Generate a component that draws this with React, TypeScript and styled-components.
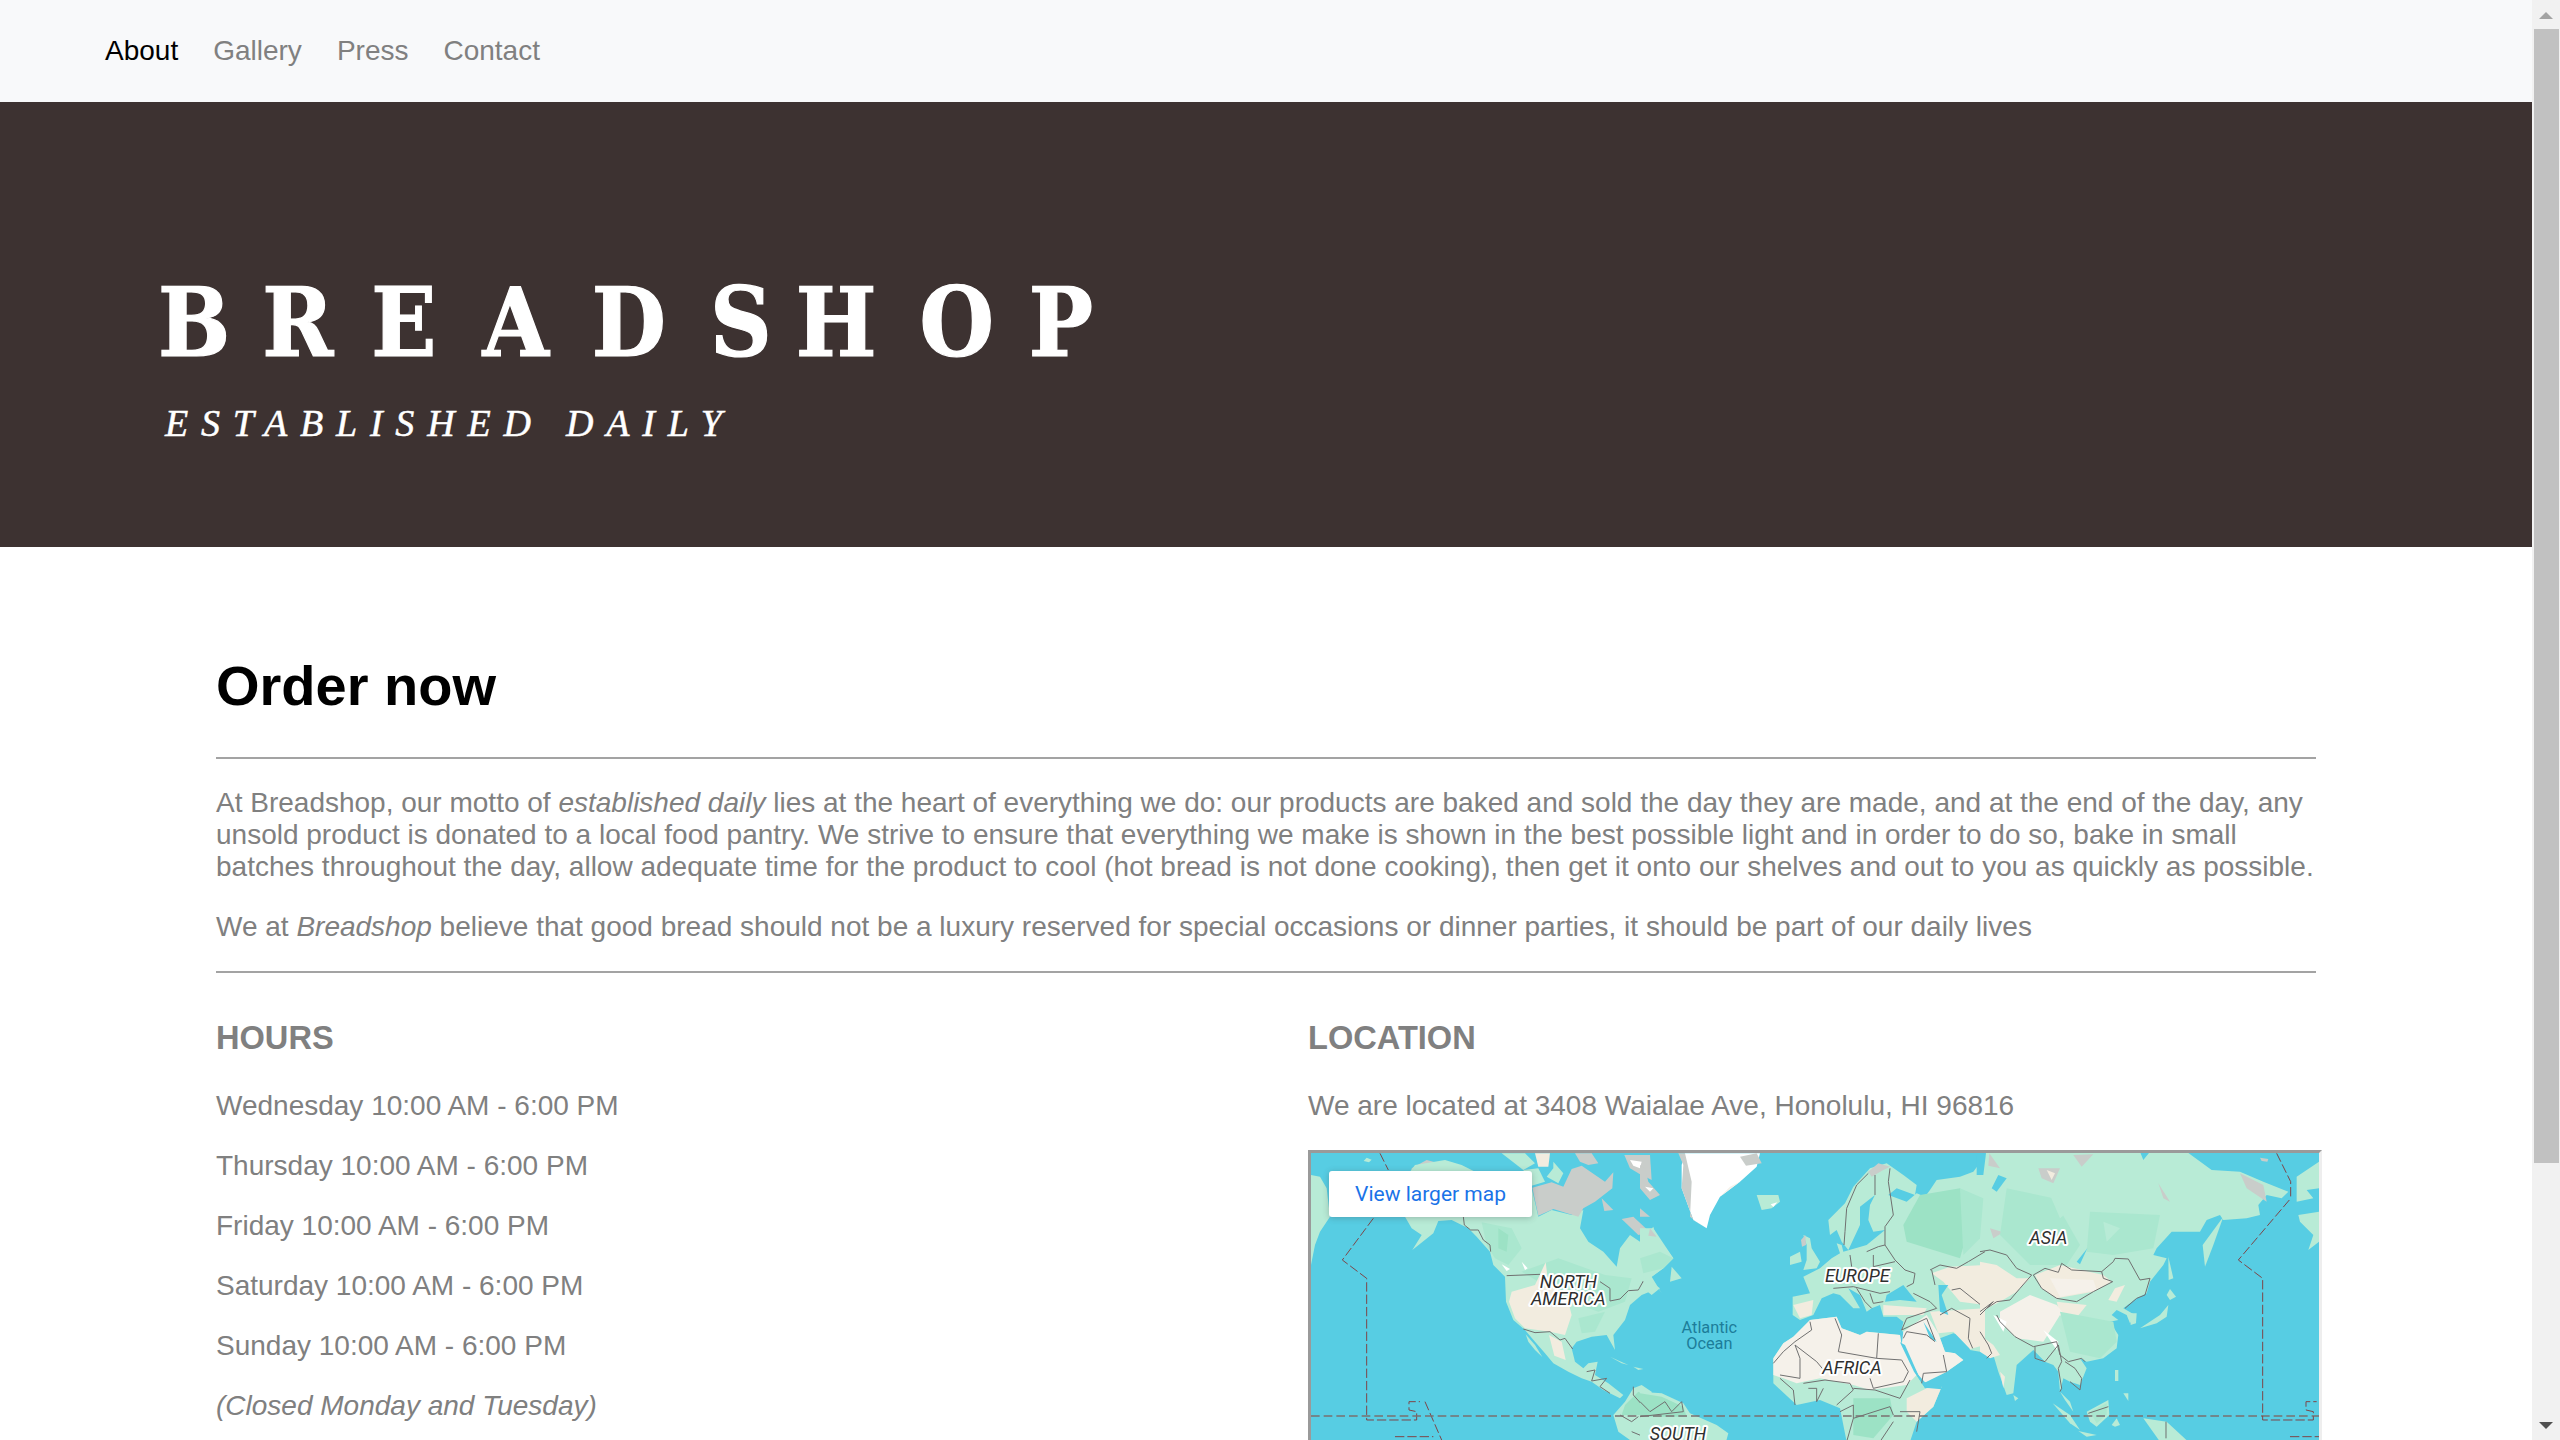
import React from "react";
import styled, { createGlobalStyle } from "styled-components";

const Global = createGlobalStyle`
  html { background: #fff; }
  body { margin: 0; font-family: "Liberation Sans", Arial, sans-serif; color: #808080; }
`;

const Page = styled.div`
  width: 2532px;
`;
const ScrollRail = styled.aside`
  position: fixed;
  top: 0;
  right: 0;
  width: 28px;
  height: 100vh;
  background: #f1f1f1;
  display: flex;
  flex-direction: column;
  justify-content: space-between;
`;
const ScrollThumb = styled.div`
  height: 1134px;
  margin: 29px 1px 0 2px;
  background: #c1c1c1;
`;
const ScrollArrow = styled.div<{ $down?: boolean }>`
  position: absolute;
  left: 7px;
  width: 0;
  height: 0;
  border-left: 7px solid transparent;
  border-right: 7px solid transparent;
  ${(p) =>
    p.$down
      ? "bottom: 11px; border-top: 7px solid #505050;"
      : "top: 12px; border-bottom: 7px solid #a3a3a3;"}
`;

const NavBar = styled.nav`
  height: 102px;
  box-sizing: border-box;
  background: #f8f9fa;
  display: flex;
  align-items: center;
  gap: 35px;
  padding-left: 105px;
`;
const NavLink = styled.a<{ $active?: boolean }>`
  font-size: 28px;
  line-height: 32px;
  color: ${(p) => (p.$active ? "#000" : "#808080")};
`;
const Hero = styled.header`
  height: 445px;
  box-sizing: border-box;
  background: #3d3231;
  padding: 169px 0 0 158px;
  color: #fff;
  overflow: hidden;
`;
const Wordmark = styled.div`
  font-family: "DejaVu Serif", serif;
  font-stretch: condensed;
  font-weight: 700;
  font-size: 95px;
  line-height: 104px;
  white-space: nowrap;
  -webkit-text-stroke: 1.2px #fff;
`;
const Glyph = styled.span<{ $gap: number }>`
  letter-spacing: ${(p) => p.$gap}px;
`;
const Tagline = styled.div`
  font-family: "Liberation Serif", serif;
  font-style: italic;
  font-size: 38px;
  line-height: 44px;
  letter-spacing: 12.8px;
  margin: 26px 0 0 7px;
  white-space: nowrap;
  -webkit-text-stroke: 0.5px #fff;
`;
const Main = styled.main`
  width: 2100px;
  padding: 107px 0 95px 216px;
`;
const Title = styled.h1`
  margin: 0 0 39px;
  font-size: 56px;
  line-height: 64px;
  font-weight: 700;
  color: #000;
`;
const Rule = styled.hr`
  margin: 0;
  border: 0;
  height: 2px;
  background: #a3a3a3;
`;
const Prose = styled.p`
  margin: 28px 0 28px;
  font-size: 28px;
  line-height: 32px;
  & + & {
    margin: 0 0 28px;
  }
`;
const Columns = styled.div`
  display: grid;
  grid-template-columns: 1092px 1014px;
  margin-top: 46px;
`;
const Heading = styled.h2`
  margin: 0 0 34px;
  font-size: 32.6px;
  line-height: 37px;
  font-weight: 700;
`;
const Line = styled.p`
  margin: 0 0 28px;
  font-size: 28px;
  line-height: 32px;
`;
const MapFrame = styled.div`
  position: relative;
  box-sizing: border-box;
  width: 1014px;
  height: 480px;
  margin-top: 28px;
  border: 3px solid #eeeeee;
  border-top-color: #9a9a9a;
  border-left-color: #9a9a9a;
  background: #57cde3;
  overflow: hidden;
`;
const MapArt = styled.svg`
  display: block;
  width: 1008px;
  height: 474px;
`;
const SoftLayer = styled.g`
  filter: blur(0.45px);
`;
const MapLink = styled.a`
  position: absolute;
  left: 18px;
  top: 18px;
  width: 203px;
  height: 46px;
  border-radius: 3px;
  background: #fff;
  box-shadow: 0 1px 6px rgba(60, 64, 67, 0.3);
  font-family: Roboto, sans-serif;
  font-size: 21px;
  line-height: 46px;
  text-align: center;
  color: #1a73e8;
`;
const Continent = styled.text`
  font-family: Roboto, sans-serif;
  font-style: italic;
  font-weight: 400;
  font-size: 54px;
  fill: #2f2f2f;
  stroke: #ffffff;
  stroke-width: 12px;
  stroke-linejoin: round;
  paint-order: stroke;
  text-anchor: middle;
`;
const OceanName = styled.text`
  font-family: Roboto, sans-serif;
  font-size: 49px;
  fill: #1d7d9a;
  text-anchor: middle;
`;

const L = "#b8ebd6", G = "#aae7cf", D = "#9ce2c5", T = "#f2ecdf", W = "#f5f1ea", S = "#c9cdca", O = "#57cde3", I = "#ffffff";
type Shape = [string, string];

const westLand: Shape[] = [
  [L, "18,90 45,95 65,130 75,215 45,260 30,300 18,360"],
  [L, "185,38 200,44 192,52 176,48"],
  [S, "320,70 365,45 430,62 440,80 320,80"],
  [L, "300,215 320,250 350,270 322,315 385,265 400,228 440,225 490,250 515,275 555,320 565,360 600,395 603,470 625,525 660,555 690,590 720,625 745,655 790,680 830,700 860,710 895,735 945,760 955,750 910,715 870,690 878,650 850,655 835,670 810,650 800,610 815,590 860,575 905,570 930,615 925,570 960,525 975,480 1010,450 1060,430 1070,445 1040,395 1075,370 1105,340 1050,265 1045,245 1005,290 975,270 945,310 935,365 895,320 850,290 825,250 835,195 800,210 740,195 700,215 680,130 600,120 540,95 470,60 420,45 330,60 300,100"],
  [S, "682,128 740,112 775,125 800,72 830,62 900,110 925,82 922,130 870,170 835,190 820,215 745,192 700,212"],
  [L, "745,50 775,85 760,115 725,95 745,70"],
  [L, "590,25 660,25 690,55 655,75"],
  [T, "690,25 735,25 730,65 700,65"],
  [L, "655,75 700,70 720,110 680,122"],
  [S, "810,25 860,25 880,55 850,60 825,50"],
  [S, "958,30 1035,30 1040,105 1000,85 975,70"],
  [I, "975,45 1010,50 1005,70 985,62"],
  [S, "890,160 925,195 898,198"],
  [S, "950,222 985,215 1035,262 1000,270"],
  [G, "530,232 620,250 650,310 610,360 570,340 545,300"],
  [D, "580,250 610,270 605,320 580,310"],
  [G, "650,380 760,340 900,390 980,400 960,470 880,500 800,470"],
  [I, "590,358 615,372 605,378"],
  [I, "650,350 668,370 660,375"],
  [T, "620,440 690,420 722,352 728,400 790,472 800,510 780,570 735,560 660,550 630,520 612,470"],
  [T, "732,570 770,590 782,645 748,632"],
  [G, "820,520 900,500 870,560 830,565"],
  [L, "662,568 690,600 712,636 690,615 670,590"],
  [L, "915,635 970,660 950,655"],
  [L, "985,665 1015,672 1000,675"],
  [L, "925,810 960,770 985,730 1010,720 1040,740 1040,885 975,885 940,860"],
  [D, "960,780 1000,740 1040,760 1040,810 950,810"],
];
const westBorders = [
  "605,392 705,388",
  "885,410 915,430 915,468 945,462 970,437 1000,435 1015,408 1030,435",
  "475,215 478,240 497,255 520,255 535,285 555,300 557,320",
  "655,552 690,563 735,560 765,585 780,580 803,612",
  "845,680 870,675 860,708 905,700 885,725 915,745",
  "985,725 985,750 1025,795 1040,795",
  "945,810 980,830 1000,815",
  "980,860 1040,885",
];

const middleLand: Shape[] = [
  [I, "135,25 360,25 350,65 300,110 240,155 210,210 200,250 160,225 125,130 125,60"],
  [S, "115,25 135,25 155,110 150,215 170,232 200,250 160,225 125,130 130,60"],
  [S, "300,35 350,25 365,55 318,62"],
  [W, "240,155 300,110 270,125"],
  [L, "350,150 415,150 420,170 395,190 365,195"],
  [I, "392,178 412,172 400,186"],
  [L, "0,250 40,250 100,340 70,370 35,395 0,405"],
  [G, "0,340 60,320 100,340 70,370 10,385"],
  [L, "95,365 125,400 90,410"],
  [L, "10,395 60,430 35,450 10,430"],
  [S, "0,60 15,70 25,110 60,150 30,165 0,130"],
  [I, "15,125 40,130 30,140"],
  [S, "0,190 30,215 0,215"],
  [S, "30,250 50,275 25,272"],
  [L, "0,740 65,745 130,775 150,805 230,840 265,865 258,890 0,890"],
  [D, "0,745 65,755 130,785 140,815 0,815"],
  [L, "500,300 490,270 510,280 515,310 540,350 530,370 490,375 500,345"],
  [S, "483,285 496,270 498,300 486,305"],
  [L, "450,335 480,320 485,350 450,360"],
  [L, "690,70 740,55 790,90 830,120 825,150 770,130 745,150 800,170 830,145 855,155 870,135 890,105 960,95 1000,80 1030,40 1040,20 1500,20 1510,45 1530,20 1640,20 1715,75 1800,80 1870,110 1945,140 1925,160 1880,150 1855,180 1860,210 1820,220 1750,225 1740,210 1700,225 1680,260 1595,260 1550,310 1540,330 1580,340 1570,360 1530,410 1520,445 1490,460 1450,490 1485,510 1470,535 1460,510 1430,495 1415,510 1435,525 1410,530 1435,570 1430,610 1390,640 1340,650 1320,640 1340,670 1320,720 1290,710 1270,700 1260,740 1290,770 1300,800 1275,765 1260,740 1255,680 1240,660 1215,650 1180,615 1130,660 1120,745 1100,750 1075,680 1060,630 1020,620 990,615 985,580 940,565 900,580 915,620 945,625 970,645 920,680 850,715 830,680 785,600 795,570 785,555 790,530 770,515 730,515 720,480 695,490 680,500 660,450 625,430 660,490 640,490 600,450 580,445 545,460 520,510 480,525 458,510 458,455 510,445 490,395 540,370 575,340 600,325 590,295 605,300 610,320 680,300 735,255 700,260 685,225 690,180 705,150 660,185 660,240 625,315 605,290 590,255 570,270 565,225 615,175 640,125"],
  [S, "685,80 715,55 750,65 730,75 695,95"],
  [D, "790,240 840,150 960,130 1000,200 960,340 800,290"],
  [G, "960,130 1030,160 1020,280 970,330"],
  [T, "875,385 930,365 1035,360 1035,480 960,470 910,410"],
  [T, "870,500 1035,490 1035,600 990,612 940,560 895,565"],
  [W, "790,560 860,510 895,565 915,620 945,625 970,645 920,680 850,715 830,680 785,600"],
  [T, "730,480 860,490 850,510 730,510"],
  [T, "460,480 520,465 515,510 480,520"],
  [O, "740,450 790,420 830,470 780,465 735,470"],
  [O, "895,420 925,420 905,450 925,510 900,500"],
  [O, "850,530 870,560 890,590 870,580"],
  [L, "510,525 590,515 605,550 660,570 680,560 780,570 785,600 830,690 855,730 905,725 880,785 830,830 810,890 620,890 600,790 540,765 470,780 400,715 400,640 430,595 460,575"],
  [W, "510,525 590,515 605,550 660,570 680,560 780,570 785,600 830,690 800,720 690,735 640,720 540,700 470,715 430,700 400,690 400,640 430,595 460,575"],
  [T, "800,760 860,730 905,725 880,785 830,830 800,800"],
  [D, "640,760 750,760 760,810 700,880 640,870"],
  [O, "780,592 795,600 835,690 855,712 905,722 905,733 855,728 822,680"],
];
const middleBorders = [
  "685,85 650,120 620,190 615,260 612,300",
  "705,90 705,150",
  "750,70 745,110 760,210 735,245 735,300",
  "630,330 635,365",
  "680,320 715,305 735,300 765,345 795,375 825,385 820,415 800,425",
  "700,330 700,365 765,350",
  "580,430 640,425 720,445 750,440",
  "650,430 675,470 695,490",
  "690,445 700,475 730,470",
  "820,445 870,470 890,490 800,520 785,555 860,520 885,585",
  "870,375 900,360 950,370 985,350 1035,320",
  "510,530 515,555 465,590 430,620 400,655",
  "465,600 530,650 555,680",
  "585,520 605,570 595,620 710,640 715,565",
  "710,640 785,645 805,680 790,710 700,730 690,700",
  "420,690 480,700 480,640 465,600",
  "490,715 555,705 630,715 640,735 590,780",
  "640,730 705,735 780,760 810,705",
  "465,780 460,735 420,700",
  "505,730 530,730 530,770 550,730",
  "600,800 640,780 640,820 750,785 760,810",
  "620,890 640,820",
  "780,800 840,800 830,860",
  "720,890 760,830",
  "790,580 800,560 860,570 885,590",
  "910,630 920,680 850,685 845,715",
  "900,510 935,490 990,520 985,580 998,610",
  "935,435 960,430 1035,490",
  "0,770 30,800 75,770 95,800 125,770 130,800 0,815",
  "875,375 885,420",
];

const eastLand: Shape[] = [
  [O, "-10,30 18,25 10,90 -10,90"],
  [O, "55,90 80,100 50,140 35,130"],
  [S, "28,25 60,70 25,62"],
  [S, "175,70 240,70 220,115 185,100"],
  [T, "200,75 225,85 215,105"],
  [S, "280,30 340,28 305,65"],
  [S, "535,115 570,170 550,160"],
  [S, "780,85 850,120 860,170 800,130"],
  [S, "30,250 70,262 40,280"],
  [G, "80,130 220,160 300,300 260,360 150,360 60,270"],
  [L, "210,150 300,170 240,220"],
  [G, "330,200 540,210 520,310 400,330 320,320"],
  [L, "370,230 420,250 380,290"],
  [O, "322,310 300,358 290,350"],
  [T, "165,390 240,360 370,390 395,410 340,440 230,460 185,430"],
  [W, "210,400 340,405 350,435 240,455"],
  [T, "0,350 50,360 110,400 150,400 110,440 60,470 0,500"],
  [T, "405,430 435,420 410,470 385,465"],
  [T, "230,470 320,480 280,530 240,510"],
  [W, "60,500 150,450 230,480 270,530 240,510 190,590 110,580 60,530"],
  [I, "190,555 235,590 230,615"],
  [I, "40,510 80,530 70,560"],
  [G, "240,500 400,530 410,590 360,640 270,620"],
  [T, "0,570 40,600 60,630 30,640 0,620"],
  [T, "60,680 75,695 70,730"],
  [L, "668,300 730,215 700,300 675,365"],
  [L, "565,335 580,400 566,405"],
  [L, "560,450 570,432 588,455 570,465"],
  [L, "480,550 540,510 565,480 560,515 530,535"],
  [L, "450,505 470,505 468,535 452,540"],
  [L, "100,750 115,760 105,768"],
  [L, "405,675 415,675 415,708 405,708"],
  [L, "430,745 445,745 445,768"],
  [L, "218,775 270,810 300,855 270,835"],
  [L, "320,800 385,765 388,810 350,845 330,830"],
  [G, "330,800 380,775 380,810 350,835"],
  [L, "295,858 350,870 320,875"],
  [L, "395,840 410,820 420,840 405,845"],
  [L, "490,820 560,830 625,890 540,890"],
  [L, "950,95 1017,50 1017,130 980,135 1000,160 950,170"],
  [L, "955,210 1017,200 1017,290 985,315 1000,270 960,230"],
  [S, "840,38 865,42 862,50 845,48"],
];
const eastBorders = [
  "0,320 30,315 80,330 110,370 155,390 120,430 90,465 50,470 20,490",
  "160,390 195,370 235,382 245,355 275,375 365,380 370,400 398,410 340,440 290,470 230,460 185,430 160,390",
  "365,380 400,350 405,340 445,342 480,405 510,400 495,450 470,460 435,490",
  "50,510 60,530 105,575 160,605 230,590 240,630 265,650 305,640 315,650",
  "165,605 165,640 195,650 235,600 245,650 235,670 245,730 240,740",
  "255,650 285,670 305,700 300,735 270,710",
  "0,500 40,470 20,490 0,510",
  "0,560 25,600 35,625 20,640",
  "325,805 385,785",
  "558,830 558,880",
];

const Polys = ({ shapes, borders }: { shapes: Shape[]; borders: string[] }) => (
  <>
    {shapes.map(([fill, points], i) => (
      <polygon key={i} points={points} fill={fill} />
    ))}
    {borders.map((points, i) => (
      <polyline key={i} points={points} fill="none" stroke="#6f6f6f" strokeWidth="3" strokeLinejoin="round" />
    ))}
  </>
);

const dateStyle = { fill: "none", stroke: "#7d4548", strokeWidth: 3, strokeDasharray: "28 9" };

const logoLetters: [string, number][] = [
  ["B", 32], ["R", 38], ["E", 46], ["A", 43], ["D", 44], ["S", 24], ["H", 43], ["O", 35], ["P", 0],
];

const App = () => (
  <Page>
    <Global />
    <NavBar>
      <NavLink $active>About</NavLink>
      <NavLink>Gallery</NavLink>
      <NavLink>Press</NavLink>
      <NavLink>Contact</NavLink>
    </NavBar>
    <Hero>
      <Wordmark>
        {logoLetters.map(([letter, gap]) => (
          <Glyph key={letter} $gap={gap}>{letter}</Glyph>
        ))}
      </Wordmark>
      <Tagline>ESTABLISHED DAILY</Tagline>
    </Hero>
    <Main>
      <Title>Order now</Title>
      <Rule />
      <Prose>
        At Breadshop, our motto of <em>established daily</em> lies at the heart of everything we do: our products are baked and sold the day they are made, and at the end of the day, any unsold product is donated to a local food pantry. We strive to ensure that everything we make is shown in the best possible light and in order to do so, bake in small batches throughout the day, allow adequate time for the product to cool (hot bread is not done cooking), then get it onto our shelves and out to you as quickly as possible.
      </Prose>
      <Prose>
        We at <em>Breadshop</em> believe that good bread should not be a luxury reserved for special occasions or dinner parties, it should be part of our daily lives
      </Prose>
      <Rule />
      <Columns>
        <section>
          <Heading>HOURS</Heading>
          <Line>Wednesday 10:00 AM - 6:00 PM</Line>
          <Line>Thursday 10:00 AM - 6:00 PM</Line>
          <Line>Friday 10:00 AM - 6:00 PM</Line>
          <Line>Saturday 10:00 AM - 6:00 PM</Line>
          <Line>Sunday 10:00 AM - 6:00 PM</Line>
          <Line><em>(Closed Monday and Tuesday)</em></Line>
        </section>
        <section>
          <Heading>LOCATION</Heading>
          <Line>We are located at 3408 Waialae Ave, Honolulu, HI 96816</Line>
          <MapFrame>
            <MapArt viewBox="1311 1153 1008 474">
              <SoftLayer>
                <g transform="translate(1305 1145) scale(0.33333)">
                  <Polys shapes={westLand} borders={westBorders} />
                </g>
                <g transform="translate(1640 1145) scale(0.33333)">
                  <Polys shapes={middleLand} borders={middleBorders} />
                </g>
                <g transform="translate(1980 1145) scale(0.33333)">
                  <Polys shapes={eastLand} borders={eastBorders} />
                </g>
                <g transform="translate(1305 1145) scale(0.33333)">
                  <polyline {...dateStyle} points="225,25 250,75" />
                  <polyline {...dateStyle} points="205,220 112,345 185,400 185,825 335,825 335,800 312,795 312,770 345,770" />
                  <polyline {...dateStyle} points="360,770 410,885" />
                  <polyline {...dateStyle} points="270,875 385,875" />
                  <line x1="18" y1="813" x2="3060" y2="813" stroke="#7a7070" strokeWidth="4" strokeDasharray="26 12" />
                </g>
                <g transform="translate(1980 1145) scale(0.33333)">
                  <polyline {...dateStyle} points="890,25 932,110 932,155" />
                  <polyline {...dateStyle} points="928,165 775,345 848,400 848,825 1000,825 1000,800 978,795 978,770 1010,770" />
                  <polyline {...dateStyle} points="930,875 1017,875" />
                </g>
              </SoftLayer>
              <g transform="translate(1980 1145) scale(0.33333)">
                <Continent x="205" y="297">ASIA</Continent>
              </g>
              <g transform="translate(1305 1145) scale(0.33333)">
                <Continent x="790" y="430">NORTH</Continent>
                <Continent x="790" y="480">AMERICA</Continent>
              </g>
              <g transform="translate(1640 1145) scale(0.33333)">
                <Continent x="652" y="410">EUROPE</Continent>
                <Continent x="636" y="687">AFRICA</Continent>
                <Continent x="114" y="885">SOUTH</Continent>
                <OceanName x="208" y="565">Atlantic</OceanName>
                <OceanName x="208" y="612">Ocean</OceanName>
              </g>
            </MapArt>
            <MapLink>View larger map</MapLink>
          </MapFrame>
        </section>
      </Columns>
    </Main>
    <ScrollRail>
      <ScrollArrow />
      <ScrollThumb />
      <ScrollArrow $down />
    </ScrollRail>
  </Page>
);

export default App;
